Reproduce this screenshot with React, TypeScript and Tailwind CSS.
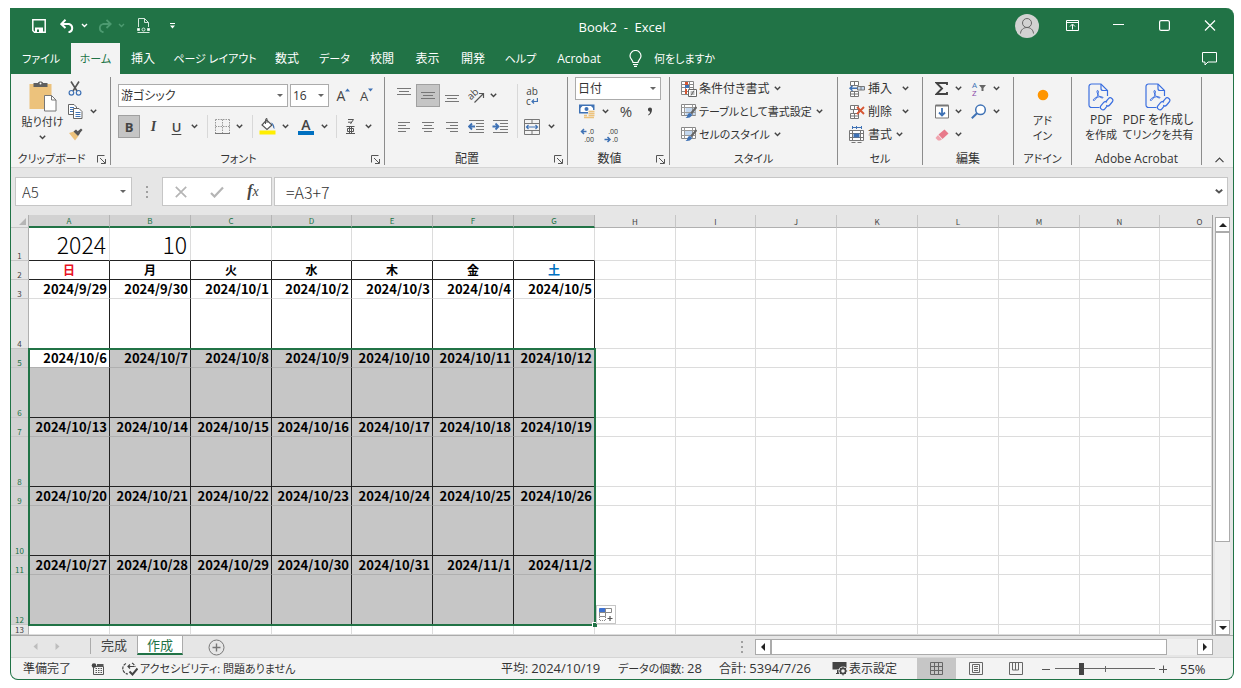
import React from 'react';
import clsx from 'clsx';

type Kids = { children?: React.ReactNode };

/* ---------- small building blocks ---------- */

const Chevron = () => (
  <svg width="7" height="5" viewBox="0 0 7 5" className="shrink-0" fill="none" stroke="#444" strokeWidth="1.4">
    <path d="M0.8 0.8 3.5 3.6 6.2 0.8" />
  </svg>
);

const Caret = () => (
  <svg width="6" height="3" viewBox="0 0 6 3" className="shrink-0" fill="#666">
    <path d="M0 0h6L3 3z" />
  </svg>
);

function Tool({ w, label, active, children }: Kids & { w: string; label: string; active?: boolean }) {
  return (
    <button
      type="button"
      aria-label={label}
      className={clsx(
        'flex h-[23px] shrink-0 items-center justify-center [&>svg]:shrink-0',
        w,
        active && 'border border-[#a0a0a0] bg-[#c5c5c5]',
      )}
    >
      {children}
    </button>
  );
}

const Drop = ({ w, label }: { w: string; label: string }) => (
  <Tool w={w} label={label}>
    <Chevron />
  </Tool>
);

const Sep = ({ w }: { w: string }) => (
  <span className={clsx('flex h-[23px] shrink-0 justify-center', w)}>
    <span className="w-px bg-[#d8d8d8]" />
  </span>
);

function Group({
  title,
  w,
  launcher,
  dense,
  children,
}: Kids & { title: string; w: string; launcher?: boolean; dense?: boolean }) {
  return (
    <section className={clsx('flex h-[88px] shrink-0 flex-col border-r border-[#8c8c8c]', w)}>
      <div className="min-h-0 flex-1">{children}</div>
      <div className="flex h-3 items-center">
        <h2 className={clsx('flex-1 whitespace-nowrap text-center leading-3', dense && 'text-[11px]')}>{title}</h2>
        {launcher && (
          <button type="button" aria-label={title + 'の設定'} className="flex w-[18px] justify-center">
            <svg width="9" height="9" viewBox="0 0 9 9" fill="none" stroke="#555">
              <path d="M0.5 7.5v-7h7M3 3l5 5M8.5 4v4.5H4" />
            </svg>
          </button>
        )}
      </div>
    </section>
  );
}

function Combo({ label, value, w }: { label: string; value: string; w: string }) {
  return (
    <span className={clsx('flex h-[23px] shrink-0 items-center border border-[#ababab] bg-white pr-1', w)}>
      <select
        aria-label={label}
        className="h-full min-w-0 flex-1 appearance-none bg-transparent pl-[2px] text-[12px] leading-5 text-[#333] outline-none"
      >
        <option>{value}</option>
      </select>
      <Caret />
    </span>
  );
}

/* ---------- ribbon icons ---------- */

const PasteIcon = () => (
  <svg width="28" height="31" viewBox="0 0 28 31">
    <rect x="0.5" y="3" width="22" height="25" fill="#ecc27c" />
    <path d="M4.5 2H9c0-2 5-2 5 0h4.500v4h-14z" fill="#5f5f5f" />
    <circle cx="11.500" cy="2.600" r="1" fill="#fff" />
    <path d="M15.500 14.500h7l4.500 4.500v11h-11.500z" fill="#fff" stroke="#777" />
    <path d="M22.500 14.500v4.500h4.500" fill="none" stroke="#777" />
  </svg>
);

const CutIcon = () => (
  <svg width="14" height="15" viewBox="0 0 14 15" fill="none">
    <path d="M3 0.500 9 10M11 0.500 5 10" stroke="#555" strokeWidth="1.600" />
    <circle cx="3.400" cy="11.800" r="2.300" stroke="#3f72b5" strokeWidth="1.200" />
    <circle cx="10.600" cy="11.800" r="2.300" stroke="#3f72b5" strokeWidth="1.200" />
  </svg>
);

const CopyIcon = () => (
  <svg width="15" height="15" viewBox="0 0 15 15" fill="#fff" stroke="#666">
    <path d="M0.500 0.500h5.500l2.500 2.500v7.500h-8z" />
    <path d="M2 3.500h4M2 5.500h4M2 7.500h4" stroke="#3f72b5" />
    <path d="M5.500 4.500h5.500l3 3v7h-8.500z" />
    <path d="M7.500 8.500h5M7.500 10.500h5M7.500 12.500h5" stroke="#3f72b5" />
  </svg>
);

const BrushIcon = () => (
  <svg width="15" height="13" viewBox="0 0 15 13">
    <path d="M1 5 6 3.500 10.500 8 7 12.500z" fill="#ecc27c" />
    <path d="M5.500 3.500 8 1.500l4 4-2 2.500z" fill="#555" />
    <path d="M9.500 3.500 13 0.500l1.500 1.500-3 3.500z" fill="#555" />
  </svg>
);

const BordersIcon = () => (
  <svg width="15" height="15" viewBox="0 0 15 15" fill="none" stroke="#999">
    <path d="M0.500 0.500h14M0.500 7.500h14M0.500 0.500v14M7.500 0.500v14M14.500 0.500v14" strokeDasharray="1.500 1" />
    <path d="M0 14.500h15" stroke="#777" />
  </svg>
);

const FillIcon = () => (
  <svg width="17" height="17" viewBox="0 0 17 17" fill="none">
    <rect x="0.500" y="12.500" width="16" height="4" fill="#ffee00" />
    <path d="M7.500 2 13 7l-5 4.500L3 7z" fill="#fff" stroke="#555" strokeWidth="1.200" />
    <path d="M6.500 6V1.500q0-1 1.500-1V5" stroke="#555" />
    <path d="M12 4.500q3.500 1 3.500 6.500-1.500-.5-2-4z" fill="#3f72b5" />
  </svg>
);

const RubyIcon = () => (
  <svg width="11" height="17" viewBox="0 0 11 17" fill="none" stroke="#555">
    <path d="M3 1.500h5.500L5.500 6M3 4.200h4" />
    <path d="M1.500 8.500h8M1 15.500h9M4.500 8.500v7M6.500 8.500v7M2.500 10.500h6v3h-6z" />
  </svg>
);

function Lines({ kind }: { kind: 'top' | 'middle' | 'bottom' | 'left' | 'center' | 'right' }) {
  const d = {
    top: 'M1 1.500h14M3 4.500h10M1 7.500h14',
    middle: 'M1 5.500h14M3 8.500h10M1 11.500h14',
    bottom: 'M1 8.500h14M3 11.500h10M1 14.500h14',
    left: 'M2 4.500h12M2 7.500h8M2 10.500h12M2 13.500h8',
    center: 'M2 4.500h12M4 7.500h8M2 10.500h12M4 13.500h8',
    right: 'M2 4.500h12M6 7.500h8M2 10.500h12M6 13.500h8',
  }[kind];
  return (
    <svg width="16" height="17" viewBox="0 0 16 17" fill="none" stroke="#777">
      <path d={d} />
    </svg>
  );
}

const Indent = ({ out }: { out?: boolean }) => (
  <svg width="16" height="14" viewBox="0 0 16 14" fill="none">
    <path d="M1 0.500h15M8 3.500h8M8 6.500h8M8 9.500h8M1 12.500h15" stroke="#777" />
    {out ? (
      <path d="M7 6.500H1.500M4 3.500l-3 3 3 3" stroke="#3f72b5" strokeWidth="1.800" />
    ) : (
      <path d="M0.500 6.500H6M3.500 3.500l3 3-3 3" stroke="#3f72b5" strokeWidth="1.800" />
    )}
  </svg>
);

const OrientIcon = () => (
  <svg width="17" height="16" viewBox="0 0 17 16" fill="none" className="overflow-visible">
    <text x="1" y="10" fontSize="10" fill="#444" transform="rotate(-42 5 9)" fontFamily="Open Sans">ab</text>
    <path d="M6.500 14.500 15 6M11 5.500H15.500V10" stroke="#555" strokeWidth="1.200" />
  </svg>
);

const WrapIcon = () => (
  <span className="flex flex-col text-[10px] leading-[10px] text-[#444]">
    <span>ab</span>
    <span className="flex items-center">
      c
      <svg width="7" height="6" viewBox="0 0 7 6" fill="none" stroke="#3f72b5" strokeWidth="1.200">
        <path d="M6.400 0v3.500H1M3 1.500l-2 2 2 2" />
      </svg>
    </span>
  </span>
);

const MergeIcon = () => (
  <svg width="16" height="16" viewBox="0 0 16 16" fill="none">
    <path d="M0.500 0.500h15v15h-15zM0.500 4.500h15M0.500 11.500h15M8 0.500v4M8 11.500v4" stroke="#777" />
    <path d="M2.500 8h11M4.500 6l-2 2 2 2M11.500 6l2 2-2 2" stroke="#3f72b5" strokeWidth="1.200" />
  </svg>
);

const MoneyIcon = () => (
  <svg width="16" height="16" viewBox="0 0 16 16" fill="none">
    <rect x="0.750" y="1.250" width="14" height="7.500" fill="#fff" stroke="#3f72b5" strokeWidth="1.500" />
    <path d="M1 1.500h3L1 4.500zM14.500 1.500h-3l3 3z" fill="#3f72b5" />
    <circle cx="7.500" cy="5" r="2" fill="#3f72b5" />
    <rect x="9" y="6" width="7" height="9" fill="#f3f3f3" />
    <path d="M9.500 7.500h6M9.500 9.500h6M9.500 11.500h6M5 13.500h10M5 11.500h3" stroke="#ecc27c" strokeWidth="1.400" />
  </svg>
);

const DecimalIcon = ({ more }: { more?: boolean }) => (
  <svg width="14" height="16" viewBox="0 0 14 16" fill="none" className="overflow-visible">
    <text x="14" y="7" fontSize="7" textAnchor="end" fill="#333" fontFamily="Open Sans">{more ? '.0' : '.00'}</text>
    <text x="14" y="15" fontSize="7" textAnchor="end" fill="#333" fontFamily="Open Sans">{more ? '.00' : '.0'}</text>
    {more ? (
      <path d="M6.500 4.500H1.500M4 2 1.500 4.500 4 7" stroke="#3f72b5" strokeWidth="1.500" />
    ) : (
      <path d="M0.500 12.500h5M3.500 10 6 12.500 3.500 15" stroke="#3f72b5" strokeWidth="1.500" />
    )}
  </svg>
);

const CondIcon = () => (
  <svg width="16" height="16" viewBox="0 0 16 16" fill="none">
    <path d="M0.500 0.500h12v13h-12zM0.500 3.500h12M0.500 6.500h12M0.500 10.500h12M4.500 0.500v13M8.500 0.500v13" stroke="#888" fill="#fff" />
    <path d="M4 1h3v3H4z" fill="#d65532" />
    <path d="M4 4h4v3H4z" fill="#3f72b5" />
    <path d="M4 8h2v5H4z" fill="#d65532" />
    <path d="M7.500 8.500h8v7h-8z" fill="#fff" stroke="#666" />
    <path d="M9.500 11h4M9.500 13h4M13 9.500l-3 5" stroke="#555" strokeWidth="0.800" />
  </svg>
);

const TableStyleIcon = ({ plain }: { plain?: boolean }) => (
  <svg width="16" height="15" viewBox="0 0 16 15" fill="none">
    <path d="M0.500 0.500h14v11h-14z" fill="#fff" stroke="#888" />
    {plain ? (
      <path d="M3.500 3.500h8v5h-8z" fill="#c3d7ee" />
    ) : (
      <path d="M4.500 4h10v7h-10z" fill="#c3d7ee" />
    )}
    <path d="M0.500 3.500h14M0.500 8.500h14M3.500 0.500v11M11.500 0.500v11" stroke="#999" />
    <path d="M15.500 3 10 9.500" stroke="#666" strokeWidth="2" />
    <path d="M9 9q2 .5 2 2.500-2 3-6.500 2.500 2-1 2-3 .5-2 2.500-2z" fill="#3f72b5" />
  </svg>
);

const InsertCells = () => (
  <svg width="16" height="16" viewBox="0 0 16 16" fill="#fff" stroke="#777">
    <path d="M1.500 0.500h8v4h-8zM5.500 0.500v4M1.500 10.500h8v5h-8zM5.500 10.500v5M1.500 13h8" />
    <path d="M8.500 5.500h7v3.500h-7zM12 5.500V9" fill="#c3d7ee" />
    <path d="M8 7.300H1M3.500 4.800 1 7.300l2.500 2.500" stroke="#3f72b5" strokeWidth="1.500" fill="none" />
  </svg>
);

const DeleteCells = () => (
  <svg width="16" height="16" viewBox="0 0 16 16" fill="#fff" stroke="#777">
    <path d="M1.500 1.500h8v4h-8zM5.500 1.500v4M4.500 5.500h5v4h-5zM1.500 9.500h8v5h-8zM5.500 9.500v5M1.500 12h8" />
    <path d="M8 3l7 7M15 3l-7 7" stroke="#d65532" strokeWidth="1.800" />
  </svg>
);

const FormatCells = () => (
  <svg width="16" height="17" viewBox="0 0 16 17" fill="none">
    <path d="M3 1.500h10M3.500 0v3M12.500 0v3M7.500 0v3" stroke="#3f72b5" />
    <path d="M0.500 4.500h14v10h-14zM3.500 4.500v10M11.500 4.500v10M0.500 7.500h14M0.500 11.500h14" fill="#fff" stroke="#777" />
    <path d="M4.500 7.500h6v4h-6z" fill="#3f72b5" />
    <path d="M2.500 16.500h4M8.500 16.500h4" stroke="#777" />
  </svg>
);

const SigmaIcon = () => (
  <svg width="13" height="13" viewBox="0 0 13 13" fill="none" stroke="#444" strokeWidth="1.900">
    <path d="M12 3V1H1.500l5.500 5.500L1.500 12H12v-2" />
  </svg>
);

const FillDownIcon = () => (
  <svg width="14" height="15" viewBox="0 0 14 15" fill="none">
    <path d="M0.500 1.500h13v12.500h-13z" fill="#fff" stroke="#777" />
    <path d="M0.500 1.500h13" stroke="#777" strokeWidth="2" />
    <path d="M7 4v7.500M4 8.500l3 3 3-3" stroke="#3f72b5" strokeWidth="1.800" />
  </svg>
);

const EraserIcon = () => (
  <svg width="14" height="12" viewBox="0 0 14 12">
    <path d="M3.500 5.500 9.500 0.500 13.500 4.500 7.500 10z" fill="#e8798a" />
    <path d="M3 6 7 10.500 5 11.500H3L0.500 9z" fill="#f0a3ae" />
  </svg>
);

const SortIcon = () => (
  <svg width="15" height="16" viewBox="0 0 15 16" fill="none" className="overflow-visible">
    <text x="0" y="7" fontSize="8" fill="#3f72b5" fontFamily="Open Sans">A</text>
    <text x="0" y="15" fontSize="8" fill="#8a48a8" fontFamily="Open Sans">Z</text>
    <path d="M7 4h7l-2.500 3v3h-2V7z" fill="#666" />
  </svg>
);

const FindIcon = () => (
  <svg width="16" height="15" viewBox="0 0 16 15" fill="none" stroke="#3f72b5">
    <circle cx="9.500" cy="5.800" r="4.800" strokeWidth="1.500" fill="#fff" />
    <path d="M6 9.200 0.800 14.200" strokeWidth="2" />
  </svg>
);

const PdfIcon = () => (
  <svg width="26" height="29" viewBox="0 0 26 29" fill="none" stroke="#3b6fe0" strokeWidth="1.200">
    <path d="M11.500 24.500h-8a2.500 2.500 0 0 1-2.500-2.500V3.500A2.500 2.500 0 0 1 3.500 1H13l6.500 6.500V13" />
    <path d="M13 1v4.500a2 2 0 0 0 2 2h4.500" />
    <path d="M9.300 7.500c1.300-.6 1.400 2 .4 4.700-1 2.800-2.800 5.600-4.200 5.300-1.200-.8 1.500-2.900 4.500-3.500 2.700-.6 5-.3 5 .7-.5 1.200-4-1-5.300-3.700-.7-1.500-1-3-.4-3.500z" strokeWidth="1" />
    <path d="M18 18.500l2.300-2.700a2.500 2.500 0 0 1 3.900 3.200l-2.500 3a2.500 2.500 0 0 1-3.500.3M19.700 22.300l-2.800 3.500a2.500 2.500 0 0 1-3.900-3.200l2.500-3a2.500 2.500 0 0 1 3.500-.3" />
  </svg>
);

/* ---------- title bar and tabs ---------- */

const ribbonTabs = [
  { name: 'ファイル', w: 'w-[60px]', kana: true },
  { name: 'ホーム', w: 'w-[49px]', active: true, kana: true },
  { name: '挿入', w: 'w-[46px]' },
  { name: 'ページ レイアウト', w: 'w-[98px]', kana: true },
  { name: '数式', w: 'w-[46px]' },
  { name: 'データ', w: 'w-[49px]', kana: true },
  { name: '校閲', w: 'w-[46px]' },
  { name: '表示', w: 'w-[45px]' },
  { name: '開発', w: 'w-[46px]' },
  { name: 'ヘルプ', w: 'w-[49px]', kana: true },
  { name: 'Acrobat', w: 'w-[68px]' },
];

function TitleBar() {
  return (
    <header className="grid h-[35px] grid-cols-[1fr_auto_1fr] items-center text-white">
      <div className="flex items-center pl-[21px]">
        <button type="button" aria-label="上書き保存">
          <svg width="14" height="14" viewBox="0 0 14 14" fill="none" stroke="#fff" strokeWidth="1.500">
            <path d="M0.800 0.800h12.400v12.400H2.500L0.800 11.500z" />
            <path d="M3 13V8.500h8V13z" fill="#fff" stroke="none" />
            <path d="M5 10.500h2v2.500H5z" fill="#217346" stroke="none" />
          </svg>
        </button>
        <button type="button" aria-label="元に戻す" className="ml-[14px]">
          <svg width="15" height="14" viewBox="0 0 15 14" fill="none" stroke="#fff" strokeWidth="2">
            <path d="M5.500 0.800 1.300 5l4.200 4M1.500 5H9a4.200 4.200 0 0 1 .5 8H8.500" />
          </svg>
        </button>
        <svg width="7" height="5" viewBox="0 0 7 5" className="ml-[6px]" fill="none" stroke="#fff" strokeWidth="1.400">
          <path d="M1 1l2.500 2.500L6 1" />
        </svg>
        <button type="button" aria-label="やり直し" className="ml-[9px]">
          <svg width="15" height="14" viewBox="0 0 15 14" fill="none" stroke="#4c9a70" strokeWidth="1.800">
            <path d="M9.500 0.800 13.700 5l-4.200 4M13.500 5H6a4.200 4.200 0 0 0-.5 8H6.500" />
          </svg>
        </button>
        <svg width="7" height="5" viewBox="0 0 7 5" className="ml-[6px]" fill="none" stroke="#4c9a70" strokeWidth="1.400">
          <path d="M1 1l2.500 2.500L6 1" />
        </svg>
        <button type="button" aria-label="印刷プレビュー" className="ml-3">
          <svg width="13" height="15" viewBox="0 0 13 15" fill="none" stroke="#d5e8dc">
            <path d="M1.500 9V0.500h6l4 4V9M7.500 0.500v4h4M0.500 14.500h12" />
            <path d="M0.500 10.500h2v2h-2zM10.500 10.500h2v2h-2z" fill="#fff" />
            <circle cx="6.500" cy="11.500" r="1.500" />
          </svg>
        </button>
        <button type="button" aria-label="クイック アクセス ツール バーのカスタマイズ" className="ml-5">
          <svg width="5" height="6" viewBox="0 0 5 6" fill="#fff">
            <path d="M0 0h5v1H0zM0 2.500h5L2.500 5.500z" />
          </svg>
        </button>
      </div>
      <h1 className="whitespace-pre pt-[2px] text-[13px]">Book2  -  Excel</h1>
      <div className="flex items-center justify-end pr-[17px]">
        <button type="button" aria-label="アカウント" className="mr-[27px]">
          <svg width="24" height="24" viewBox="0 0 24 24" fill="none" stroke="#666">
            <circle cx="12" cy="12" r="12" fill="#d2d2d2" stroke="none" />
            <circle cx="12" cy="9" r="4.500" />
            <path d="M5.500 19.500C6 11.500 18 11.500 18.500 19.500" />
          </svg>
        </button>
        <button type="button" aria-label="リボンの表示オプション" className="mr-[34px]">
          <svg width="13" height="11" viewBox="0 0 13 11" fill="none" stroke="#fff">
            <path d="M0.500 0.500h12v10h-12zM0.500 2.500h12M6.500 9.500V4.500M4 6.500l2.500-2.500L9 6.500" />
          </svg>
        </button>
        <button type="button" aria-label="最小化" className="mr-[35px]">
          <svg width="11" height="11" viewBox="0 0 11 11" stroke="#fff"><path d="M0 4.500h11" /></svg>
        </button>
        <button type="button" aria-label="最大化" className="mr-[34px]">
          <svg width="11" height="11" viewBox="0 0 11 11" fill="none" stroke="#fff" strokeWidth="1.200">
            <rect x="0.600" y="0.600" width="9.800" height="9.800" rx="1.500" />
          </svg>
        </button>
        <button type="button" aria-label="閉じる">
          <svg width="12" height="11" viewBox="0 0 12 11" stroke="#fff" strokeWidth="1.200">
            <path d="M1 0.500l10 10M11 0.500l-10 10" />
          </svg>
        </button>
      </div>
    </header>
  );
}

function RibbonTabs() {
  return (
    <nav className="flex h-[31px] items-stretch text-white">
      {ribbonTabs.map((t) => (
        <button
          key={t.name}
          type="button"
          className={clsx(
            'shrink-0 whitespace-nowrap text-center',
            t.w,
            t.kana && 'text-[11px]',
            t.active && 'bg-[#f3f3f3] text-[#217346]',
          )}
        >
          {t.name}
        </button>
      ))}
      <button type="button" className="ml-4 flex items-center gap-3 whitespace-nowrap text-[11px]">
        <svg width="13" height="17" viewBox="0 0 13 17" fill="none" stroke="#fff" strokeWidth="1.200">
          <path d="M4 12.500C4 10 1 9 1 6a5.500 5.500 0 0 1 11 0c0 3-3 4-3 6.500zM4 14.500h5M5 16.300h3" />
        </svg>
        何をしますか
      </button>
      <button type="button" aria-label="コメント" className="ml-auto pr-4">
        <svg width="15" height="14" viewBox="0 0 15 14" fill="none" stroke="#fff">
          <path d="M0.500 0.500h14v9.500H6l-3 3v-3H0.500z" />
        </svg>
      </button>
    </nav>
  );
}

/* ---------- ribbon ---------- */

function StyleRow({ icon, dense, children }: Kids & { icon: React.ReactNode; dense?: boolean }) {
  return (
    <button type="button" className="flex h-[23px] items-center gap-[2px] whitespace-nowrap">
      {icon}
      <span className={dense ? 'text-[11px]' : 'text-[12px]'}>{children}</span>
      <span className="pl-[2px]"><Chevron /></span>
    </button>
  );
}

function Ribbon() {
  return (
    <div className="flex items-start border-b border-[#d5d5d5] bg-[#f3f3f3] pb-[2px] pt-[3px]">
      <Group title="クリップボード" w="w-[100px]" launcher dense>
        <div className="flex">
          <button type="button" className="flex w-[58px] flex-col items-center pl-[5px] pt-1">
            <PasteIcon />
            <span className="whitespace-nowrap pt-[2px] text-[11px] leading-[15px]">貼り付け</span>
            <span className="pt-[6px]"><Chevron /></span>
          </button>
          <div>
            <Tool w="w-[12px]" label="切り取り"><CutIcon /></Tool>
            <span className="flex">
              <Tool w="w-[12px]" label="コピー"><CopyIcon /></Tool>
              <Drop w="w-[24px]" label="コピーのオプション" />
            </span>
            <Tool w="w-[12px]" label="書式のコピー"><BrushIcon /></Tool>
          </div>
        </div>
      </Group>

      <Group title="フォント" w="w-[274px]" launcher dense>
        <div className="flex flex-col gap-2 pl-[7px] pt-[7px]">
          <div className="flex">
            <Combo label="フォント名" value="游ゴシック" w="w-[170px]" />
            <span className="w-[2px]" />
            <Combo label="フォント サイズ" value="16" w="w-[39px]" />
            <span className="w-[3px]" />
            <Tool w="w-[23px]" label="フォント サイズの拡大">
              <span className="text-[14px] text-[#444]">A</span>
              <svg width="5" height="16" viewBox="0 0 5 16" fill="#3f72b5"><path d="M0 3.500h5L2.500 0.500z" /></svg>
            </Tool>
            <Tool w="w-[23px]" label="フォント サイズの縮小">
              <span className="text-[13px] text-[#444]">A</span>
              <svg width="5" height="16" viewBox="0 0 5 16" fill="#3f72b5"><path d="M0 0.500h5L2.500 3.500z" /></svg>
            </Tool>
          </div>
          <div className="flex">
            <Tool w="w-[22px]" label="太字" active><b className="text-[13px] text-[#444]">B</b></Tool>
            <span className="w-[2px]" />
            <Tool w="w-[23px]" label="斜体"><b className="font-['Liberation_Serif'] text-[14px] italic text-[#444]">I</b></Tool>
            <Tool w="w-[23px]" label="下線"><b className="text-[13px] font-semibold text-[#444] underline underline-offset-2">U</b></Tool>
            <Drop w="w-[13px]" label="下線のオプション" />
            <Sep w="w-[13px]" />
            <Tool w="w-[16px]" label="罫線"><BordersIcon /></Tool>
            <Drop w="w-[19px]" label="罫線のオプション" />
            <Sep w="w-[7px]" />
            <Tool w="w-[22px]" label="塗りつぶしの色"><FillIcon /></Tool>
            <Drop w="w-[14px]" label="塗りつぶしのオプション" />
            <Tool w="w-[28px]" label="フォントの色">
              <span className="w-4 border-b-4 border-[#0070c0] text-center text-[14px] font-semibold leading-[13px] text-[#444]">A</span>
            </Tool>
            <Drop w="w-[8px]" label="フォントの色のオプション" />
            <Sep w="w-[16px]" />
            <Tool w="w-[12px]" label="ふりがな"><RubyIcon /></Tool>
            <Drop w="w-[24px]" label="ふりがなのオプション" />
          </div>
        </div>
      </Group>

      <Group title="配置" w="w-[183px]" launcher>
        <div className="flex pl-[7px] pt-[7px]">
          <div className="flex flex-col gap-2 pr-[5px]">
            <div className="flex">
              <Tool w="w-[24px]" label="上揃え"><Lines kind="top" /></Tool>
              <Tool w="w-[24px]" label="上下中央揃え" active><Lines kind="middle" /></Tool>
              <Tool w="w-[24px]" label="下揃え"><Lines kind="bottom" /></Tool>
              <Tool w="w-[24px]" label="方向"><OrientIcon /></Tool>
              <Drop w="w-[10px]" label="方向のオプション" />
            </div>
            <div className="flex">
              <Tool w="w-[24px]" label="左揃え"><Lines kind="left" /></Tool>
              <Tool w="w-[24px]" label="中央揃え"><Lines kind="center" /></Tool>
              <Tool w="w-[24px]" label="右揃え"><Lines kind="right" /></Tool>
              <Tool w="w-[24px]" label="インデントを減らす"><Indent out /></Tool>
              <Tool w="w-[24px]" label="インデントを増やす"><Indent /></Tool>
            </div>
          </div>
          <div className="flex flex-col gap-2 border-l border-[#d8d8d8]">
            <Tool w="w-[28px]" label="折り返して全体を表示する"><WrapIcon /></Tool>
            <div className="flex">
              <Tool w="w-[28px]" label="セルを結合して中央揃え"><MergeIcon /></Tool>
              <Drop w="w-[10px]" label="結合のオプション" />
            </div>
          </div>
        </div>
      </Group>

      <Group title="数値" w="w-[102px]" launcher>
        <div className="pl-[7px]">
          <Combo label="表示形式" value="日付" w="w-[86px]" />
          <div className="flex">
            <Tool w="w-[23px]" label="通貨表示形式"><MoneyIcon /></Tool>
            <Drop w="w-[14px]" label="通貨のオプション" />
            <Tool w="w-[28px]" label="パーセント スタイル"><span className="pb-[2px] text-[15px] text-[#444]">%</span></Tool>
            <Tool w="w-[20px]" label="桁区切りスタイル">
              <svg width="6" height="9" viewBox="0 0 6 9" fill="#444">
                <path d="M3 0.500a2 2 0 0 1 2 2C5 5.500 3.500 7.500 1.500 8.500L1 7.800C2.300 7 3 6 3 4.700a2 2 0 0 1 0-4.200z" />
              </svg>
            </Tool>
          </div>
          <div className="flex">
            <Tool w="w-[23px]" label="小数点以下の表示桁数を増やす"><DecimalIcon more /></Tool>
            <Tool w="w-[25px]" label="小数点以下の表示桁数を減らす"><DecimalIcon /></Tool>
          </div>
        </div>
      </Group>

      <Group title="スタイル" w="w-[168px]" dense>
        <div className="pl-[11px]">
          <StyleRow icon={<CondIcon />}>条件付き書式</StyleRow>
          <StyleRow icon={<TableStyleIcon />} dense>テーブルとして書式設定</StyleRow>
          <StyleRow icon={<TableStyleIcon plain />} dense>セルのスタイル</StyleRow>
        </div>
      </Group>

      <Group title="セル" w="w-[85px]" dense>
        <div className="pl-[11px]">
          {[
            { t: '挿入', i: <InsertCells />, g: 'pl-[10px]' },
            { t: '削除', i: <DeleteCells />, g: 'pl-[10px]' },
            { t: '書式', i: <FormatCells />, g: 'pl-1' },
          ].map((r) => (
            <button key={r.t} type="button" className="flex h-[23px] items-center whitespace-nowrap">
              {r.i}
              <span className="pl-[3px]">{r.t}</span>
              <span className={r.g}><Chevron /></span>
            </button>
          ))}
        </div>
      </Group>

      <Group title="編集" w="w-[91px]">
        <div className="pl-[7px]">
          <div className="flex">
            <Tool w="w-[23px]" label="オート SUM"><SigmaIcon /></Tool>
            <Drop w="w-[11px]" label="オート SUM のオプション" />
            <Tool w="w-[30px]" label="並べ替えとフィルター"><SortIcon /></Tool>
            <Drop w="w-[4px]" label="並べ替えのオプション" />
          </div>
          <div className="flex">
            <Tool w="w-[23px]" label="フィル"><FillDownIcon /></Tool>
            <Drop w="w-[11px]" label="フィルのオプション" />
            <Tool w="w-[30px]" label="検索と選択"><FindIcon /></Tool>
            <Drop w="w-[4px]" label="検索のオプション" />
          </div>
          <div className="flex">
            <Tool w="w-[23px]" label="クリア"><EraserIcon /></Tool>
            <Drop w="w-[11px]" label="クリアのオプション" />
          </div>
        </div>
      </Group>

      <Group title="アドイン" w="w-[58px]" dense>
        <button type="button" className="flex w-full flex-col items-center">
          <span className="flex h-9 items-center">
            <svg width="12" height="12" viewBox="0 0 12 12"><circle cx="6" cy="6" r="5.300" fill="#ff9500" /></svg>
          </span>
          <span className="text-[11px] leading-[15px]">アド<br />イン</span>
        </button>
      </Group>

      <Group title="Adobe Acrobat" w="w-[130px]">
        <div className="flex">
          <button type="button" className="flex w-[58px] flex-col items-center pt-[6px]">
            <PdfIcon />
            <span className="whitespace-nowrap leading-[15px]">PDF<br /><span className="text-[11px]">を作成</span></span>
          </button>
          <button type="button" className="flex w-[56px] flex-col items-center pt-[6px]">
            <PdfIcon />
            <span className="whitespace-nowrap leading-[15px]">PDF を作成し<br /><span className="text-[11px]">てリンクを共有</span></span>
          </button>
        </div>
      </Group>

      <button type="button" aria-label="リボンを折りたたむ" className="ml-auto mr-[9px] self-end pb-[2px]">
        <svg width="9" height="6" viewBox="0 0 9 6" fill="none" stroke="#444" strokeWidth="1.200">
          <path d="M0.500 5.200 4.500 1l4 4.200" />
        </svg>
      </button>
    </div>
  );
}

/* ---------- formula bar ---------- */

const Dots = () => (
  <svg width="2" height="12" viewBox="0 0 2 12" className="shrink-0" fill="#a0a0a0">
    <path d="M0 0h2v2H0zM0 5h2v2H0zM0 10h2v2H0z" />
  </svg>
);

function FormulaBar() {
  return (
    <div className="flex items-center bg-[#e6e6e6] pb-[9px] pl-1 pr-[5px] pt-[9px]">
      <span className="flex h-[29px] w-[117px] shrink-0 items-center border border-[#c6c6c6] bg-white pr-[5px]">
        <input
          aria-label="名前ボックス"
          defaultValue="A5"
          className="min-w-0 flex-1 bg-transparent pl-[6px] font-['Noto_Sans_CJK_JP',sans-serif] text-[15px] font-light text-[#333] outline-none"
        />
        <Caret />
      </span>
      <span className="flex w-[30px] justify-center"><Dots /></span>
      <span className="flex h-[29px] w-[110px] shrink-0 items-center border border-[#c6c6c6] bg-white">
        <button type="button" aria-label="キャンセル" className="flex w-9 justify-center">
          <svg width="12" height="12" viewBox="0 0 12 12" stroke="#b5b5b5" strokeWidth="1.700"><path d="M0.800 0.800l10.400 10.400M11.200 0.800 0.800 11.200" /></svg>
        </button>
        <button type="button" aria-label="入力" className="flex w-9 justify-center">
          <svg width="14" height="12" viewBox="0 0 14 12" fill="none" stroke="#b5b5b5" strokeWidth="2.200"><path d="M1 7l3.500 3.500L13 1.500" /></svg>
        </button>
        <button type="button" aria-label="関数の挿入" className="w-9 text-center font-['Liberation_Serif'] text-[16px] italic leading-5 text-[#444]">
          <b>f</b><span className="text-[14px]">x</span>
        </button>
      </span>
      <span className="ml-[2px] flex h-[29px] min-w-0 flex-1 items-center border border-[#c6c6c6] bg-white pr-1">
        <input
          aria-label="数式バー"
          defaultValue="=A3+7"
          className="min-w-0 flex-1 bg-transparent pl-[11px] font-['Noto_Sans_CJK_JP',sans-serif] text-[16px] font-light text-[#333] outline-none"
        />
        <svg width="8" height="5" viewBox="0 0 8 5" fill="none" stroke="#555" strokeWidth="2"><path d="M0.800 0.800 4 3.500 7.200 0.800" /></svg>
      </span>
    </div>
  );
}

/* ---------- worksheet ---------- */

const columns = 'ABCDEFGHIJKLMNO'.split('');

// 80.8px per column at 55% zoom, rounded to the pixel grid
const widths = ['w-[81px]', 'w-[81px]', 'w-[81px]', 'w-[80px]', 'w-[81px]'];

const rows: { h: string; kind: 'title' | 'week' | 'date' | 'body' | 'empty'; cells?: string[] }[] = [
  { h: 'h-[33px]', kind: 'title', cells: ['2024', '10'] },
  { h: 'h-[19px]', kind: 'week', cells: ['日', '月', '火', '水', '木', '金', '土'] },
  { h: 'h-[19px]', kind: 'date', cells: ['2024/9/29', '2024/9/30', '2024/10/1', '2024/10/2', '2024/10/3', '2024/10/4', '2024/10/5'] },
  { h: 'h-[50px]', kind: 'body' },
  { h: 'h-[19px]', kind: 'date', cells: ['2024/10/6', '2024/10/7', '2024/10/8', '2024/10/9', '2024/10/10', '2024/10/11', '2024/10/12'] },
  { h: 'h-[50px]', kind: 'body' },
  { h: 'h-[19px]', kind: 'date', cells: ['2024/10/13', '2024/10/14', '2024/10/15', '2024/10/16', '2024/10/17', '2024/10/18', '2024/10/19'] },
  { h: 'h-[50px]', kind: 'body' },
  { h: 'h-[19px]', kind: 'date', cells: ['2024/10/20', '2024/10/21', '2024/10/22', '2024/10/23', '2024/10/24', '2024/10/25', '2024/10/26'] },
  { h: 'h-[50px]', kind: 'body' },
  { h: 'h-[19px]', kind: 'date', cells: ['2024/10/27', '2024/10/28', '2024/10/29', '2024/10/30', '2024/10/31', '2024/11/1', '2024/11/2'] },
  { h: 'h-[50px]', kind: 'body' },
  { h: 'h-[10px]', kind: 'empty' },
];

function cellClass(kind: string, row: number, col: number) {
  const inCalendar = col < 7 && kind !== 'empty';
  const selected = inCalendar && row >= 5;
  return clsx(
    'overflow-hidden whitespace-nowrap border-b border-r p-0',
    inCalendar && kind !== 'title' ? 'border-r-[#222]' : 'border-r-[#dcdcdc]',
    inCalendar && kind !== 'date' ? 'border-b-[#222]' : selected ? 'border-b-[#b0b0b0]' : 'border-b-[#dcdcdc]',
    selected && !(row === 5 && col === 0) && 'bg-[#c6c6c6]',
    kind === 'title' && 'pr-[3px] text-right text-[23px] font-light leading-[30px]',
    kind === 'week' && 'text-center text-[12px] font-bold leading-[18px]',
    kind === 'date' && 'pr-[2px] text-right text-[13px] font-bold leading-[18px]',
    kind === 'week' && col === 0 && 'text-[#e81123]',
    kind === 'week' && col === 6 && 'text-[#0070c0]',
  );
}

function Sheet() {
  return (
    <div className="flex bg-[#e6e6e6]">
      <div className="relative min-w-0 flex-1 overflow-hidden border-r border-[#a0a0a0]">
        <table className="w-full table-fixed border-separate border-spacing-0 bg-white font-['Noto_Sans_CJK_JP',sans-serif] text-black">
          <colgroup>
            <col className="w-[18px]" />
            {columns.map((c, i) => (
              <col key={c} className={i < 14 ? widths[i % 5] : undefined} />
            ))}
          </colgroup>
          <thead>
            <tr className="h-[13px]">
              <th className="border-b border-r border-b-[#c6c6c6] border-r-[#b0b0b0] bg-[#e6e6e6] p-0">
                <svg width="7" height="7" viewBox="0 0 7 7" className="ml-auto mr-[2px]" fill="#b5b5b5"><path d="M7 0v7H0z" /></svg>
              </th>
              {columns.map((c, i) => (
                <th
                  key={c}
                  scope="col"
                  className={clsx(
                    'border-r p-0 text-[8px] font-normal leading-[11px]',
                    i < 7
                      ? 'border-b-2 border-b-[#217346] border-r-[#b5b5b5] bg-[#d2d2d2] text-[#217346]'
                      : 'border-b border-b-[#b0b0b0] border-r-[#c6c6c6] bg-[#e6e6e6] text-[#444]',
                    i === 14 && 'border-r-transparent pl-[28px]',
                  )}
                >
                  {c}
                </th>
              ))}
            </tr>
          </thead>
          <tbody>
            {rows.map((r, ri) => {
              const n = ri + 1;
              const sel = n >= 5 && n <= 12;
              return (
                <tr key={n} className={r.h}>
                  <th
                    scope="row"
                    className={clsx(
                      'border-b border-r border-b-[#c6c6c6] p-0 text-center align-bottom text-[8px] font-normal leading-[9px]',
                      sel ? 'border-r-[#217346] bg-[#d2d2d2] text-[#217346]' : 'border-r-[#b0b0b0] bg-[#e6e6e6] text-[#444]',
                    )}
                  >
                    {n}
                  </th>
                  {columns.map((c, ci) => (
                    <td key={c} className={cellClass(r.kind, n, ci)}>
                      {r.cells?.[ci]}
                    </td>
                  ))}
                </tr>
              );
            })}
          </tbody>
        </table>
        <div className="pointer-events-none absolute left-[17px] top-[133px] h-[278px] w-[568px] border-2 border-[#217346]">
          <span className="absolute -bottom-[3px] -right-[3px] size-[5px] border-l border-t border-white bg-[#217346]" />
        </div>
        <button type="button" aria-label="オートフィル オプション" className="absolute left-[585px] top-[390px] flex h-[19px] w-[20px] items-center justify-center border border-[#c6c6c6] bg-white">
          <svg width="14" height="14" viewBox="0 0 14 14" fill="none">
            <path d="M0.500 0.500h6v4h-6z" fill="#3f72d0" stroke="#3f72d0" />
            <path d="M6.500 0.500h6v4h-6zM0.500 4.500h6v4h-6z" stroke="#888" />
            <path d="M0.500 9v3.500h6V9" stroke="#888" strokeDasharray="1 1" />
            <path d="M8.500 10.500h5M11 8v5" stroke="#555" strokeWidth="1.200" />
          </svg>
        </button>
      </div>
      <div className="flex w-5 flex-col items-center pr-[1px] pt-[2px]">
        <button type="button" aria-label="上へスクロール" className="flex h-[15px] w-[15px] items-center justify-center border border-[#ababab] bg-white">
          <svg width="8" height="4" viewBox="0 0 8 4" fill="#222"><path d="M0 4h8L4 0z" /></svg>
        </button>
        <div className="flex w-[15px] flex-1 flex-col bg-[#f0f0f0]">
          <div className="h-[80%] border border-[#ababab] bg-white" />
        </div>
        <button type="button" aria-label="下へスクロール" className="flex h-[15px] w-[15px] items-center justify-center border border-[#ababab] bg-white">
          <svg width="8" height="4" viewBox="0 0 8 4" fill="#222"><path d="M0 0h8L4 4z" /></svg>
        </button>
      </div>
    </div>
  );
}

function SheetTabs() {
  return (
    <div className="flex h-[22px] items-start border-t border-[#ababab] bg-[#e6e6e6]">
      <button type="button" aria-label="前のシート" className="ml-[22px] self-center">
        <svg width="5" height="7" viewBox="0 0 5 7" fill="#bdbdbd"><path d="M4.500 0v7L0.500 3.500z" /></svg>
      </button>
      <button type="button" aria-label="次のシート" className="ml-[17px] self-center">
        <svg width="5" height="7" viewBox="0 0 5 7" fill="#bdbdbd"><path d="M0.500 0v7l4-3.500z" /></svg>
      </button>
      <span className="ml-[30px] mt-[2px] h-4 w-px bg-[#ababab]" />
      <button type="button" className="h-[18px] w-[46px] shrink-0 whitespace-nowrap text-[13px] leading-4 text-[#444]">完成</button>
      <button type="button" className="h-[19px] w-[46px] shrink-0 whitespace-nowrap border-x border-b-2 border-x-[#ababab] border-b-[#217346] bg-white text-[13px] leading-4 text-[#217346]">作成</button>
      <button type="button" aria-label="新しいシート" className="ml-[25px] mt-[3px]">
        <svg width="17" height="17" viewBox="0 0 17 17" fill="none" stroke="#777">
          <circle cx="8.500" cy="8.500" r="7.500" />
          <path d="M4.500 8.500h8M8.500 4.500v8" strokeWidth="1.400" />
        </svg>
      </button>
      <span className="ml-auto self-center"><Dots /></span>
      <div className="ml-3 mr-5 mt-[3px] flex h-4 w-[458px] bg-[#f0f0f0]">
        <button type="button" aria-label="左へスクロール" className="flex w-4 items-center justify-center border border-[#ababab] bg-white">
          <svg width="4" height="8" viewBox="0 0 4 8" fill="#222"><path d="M4 0v8L0 4z" /></svg>
        </button>
        <div className="w-[396px] border border-[#ababab] bg-white" />
        <button type="button" aria-label="右へスクロール" className="ml-auto flex w-4 items-center justify-center border border-[#ababab] bg-white">
          <svg width="4" height="8" viewBox="0 0 4 8" fill="#222"><path d="M0 0v8l4-4z" /></svg>
        </button>
      </div>
    </div>
  );
}

function StatusBar() {
  return (
    <footer className="flex h-[22px] items-center whitespace-nowrap border-t border-[#d5d5d5] bg-[#f3f3f3] pl-3">
      <span className="w-[68px]">準備完了</span>
      <svg width="13" height="12" viewBox="0 0 13 12" fill="none" stroke="#555">
        <path d="M2.500 3.500h10v8h-10z" />
        <path d="M6 2h6.500" strokeWidth="2" />
        <circle cx="3" cy="2.500" r="2.300" fill="#444" stroke="none" />
        <path d="M4.500 5.500h7M4.500 7.500h7M4.500 9.500h7" strokeDasharray="1.500 1" />
      </svg>
      <button type="button" className="ml-[18px] flex items-center gap-[2px] text-[11px]">
        <svg width="16" height="14" viewBox="0 0 16 14" fill="none" stroke="#444" strokeWidth="1.200">
          <path d="M4 1.500a5.500 5.500 0 0 0 2 10.500M10 1a5.500 5.500 0 0 1 3 4" strokeDasharray="3 1" />
          <path d="M6 4.500h6M8 2.500 6 4.500l2 2" />
          <path d="M7.500 9.500l3 3 5-6" strokeWidth="2" />
        </svg>
        アクセシビリティ: 問題ありません
      </button>
      <span className="ml-auto w-[117px]">平均: <span className="text-[13px]">2024/10/19</span></span>
      <span className="w-[101px] text-[11px]">データの個数: <span className="text-[13px]">28</span></span>
      <span className="w-[113px]">合計: <span className="text-[13px]">5394/7/26</span></span>
      <button type="button" className="flex w-[85px] items-center gap-[1px]">
        <svg width="16" height="15" viewBox="0 0 16 15" fill="#444">
          <path d="M0.500 1h14v7.500h-14zM5 9h4v4H4v-1h1z" />
          <circle cx="11" cy="10" r="4.600" fill="#f3f3f3" />
          <circle cx="11" cy="10" r="2.600" fill="none" stroke="#444" strokeWidth="1.600" />
          <path d="M11 5.500v2M11 12.500v2M6.800 10h2M13.200 10h2M8 7l1 1M14 7l-1 1M8 13l1-1M14 13l-1-1" stroke="#444" />
        </svg>
        表示設定
      </button>
      <button type="button" aria-label="標準" className="flex h-full w-[39px] items-center justify-center bg-[#c6c6c6]">
        <svg width="13" height="13" viewBox="0 0 13 13" fill="none" stroke="#666">
          <path d="M0.500 0.500h12v12h-12zM0.500 4.500h12M0.500 8.500h12M4.500 0.500v12M8.500 0.500v12" />
        </svg>
      </button>
      <button type="button" aria-label="ページ レイアウト表示" className="flex w-10 items-center justify-center">
        <svg width="14" height="13" viewBox="0 0 14 13" fill="none" stroke="#666">
          <path d="M0.500 0.500h13v12h-13zM3.500 2.500h7v8h-7zM5 4.500h4M5 6.500h4M5 8.500h4" />
        </svg>
      </button>
      <button type="button" aria-label="改ページ プレビュー" className="flex w-10 items-center justify-center">
        <svg width="14" height="13" viewBox="0 0 14 13" fill="none" stroke="#666">
          <path d="M0.500 0.500h13v12h-13zM3.500 0.500v7.500h6M6.500 0.500v7.500M9.500 0.500v7.500" />
        </svg>
      </button>
      <button type="button" aria-label="縮小" className="ml-[6px]">
        <svg width="8" height="8" viewBox="0 0 8 8" stroke="#555"><path d="M0 4.500h8" /></svg>
      </button>
      <span className="relative ml-[5px] flex h-5 w-[100px] items-center">
        <input
          type="range"
          aria-label="ズーム"
          min={0}
          max={100}
          defaultValue={25}
          className="h-px w-full appearance-none bg-[#666] [&::-webkit-slider-thumb]:h-3 [&::-webkit-slider-thumb]:w-[5px] [&::-webkit-slider-thumb]:appearance-none [&::-webkit-slider-thumb]:bg-[#444]"
        />
        <span className="absolute left-1/2 top-[7px] h-[6px] w-px bg-[#666]" />
      </span>
      <button type="button" aria-label="拡大" className="ml-1">
        <svg width="8" height="8" viewBox="0 0 8 8" stroke="#555"><path d="M0 4.500h8M4.500 0.500v8" /></svg>
      </button>
      <span className="ml-[13px] w-[53px] text-[13px]">55%</span>
    </footer>
  );
}

export default function App() {
  return (
    <div className="bg-white pb-2 pl-[10px] pr-[7px] pt-2">
      <div className="overflow-hidden rounded-b-lg rounded-tr-lg border-x border-b border-[#217346] bg-[#217346] font-['Open_Sans','Noto_Sans_CJK_JP',sans-serif] text-[12px] leading-4 text-[#333] [font-feature-settings:'palt']">
        <TitleBar />
        <RibbonTabs />
        <Ribbon />
        <FormulaBar />
        <Sheet />
        <SheetTabs />
        <StatusBar />
      </div>
    </div>
  );
}
